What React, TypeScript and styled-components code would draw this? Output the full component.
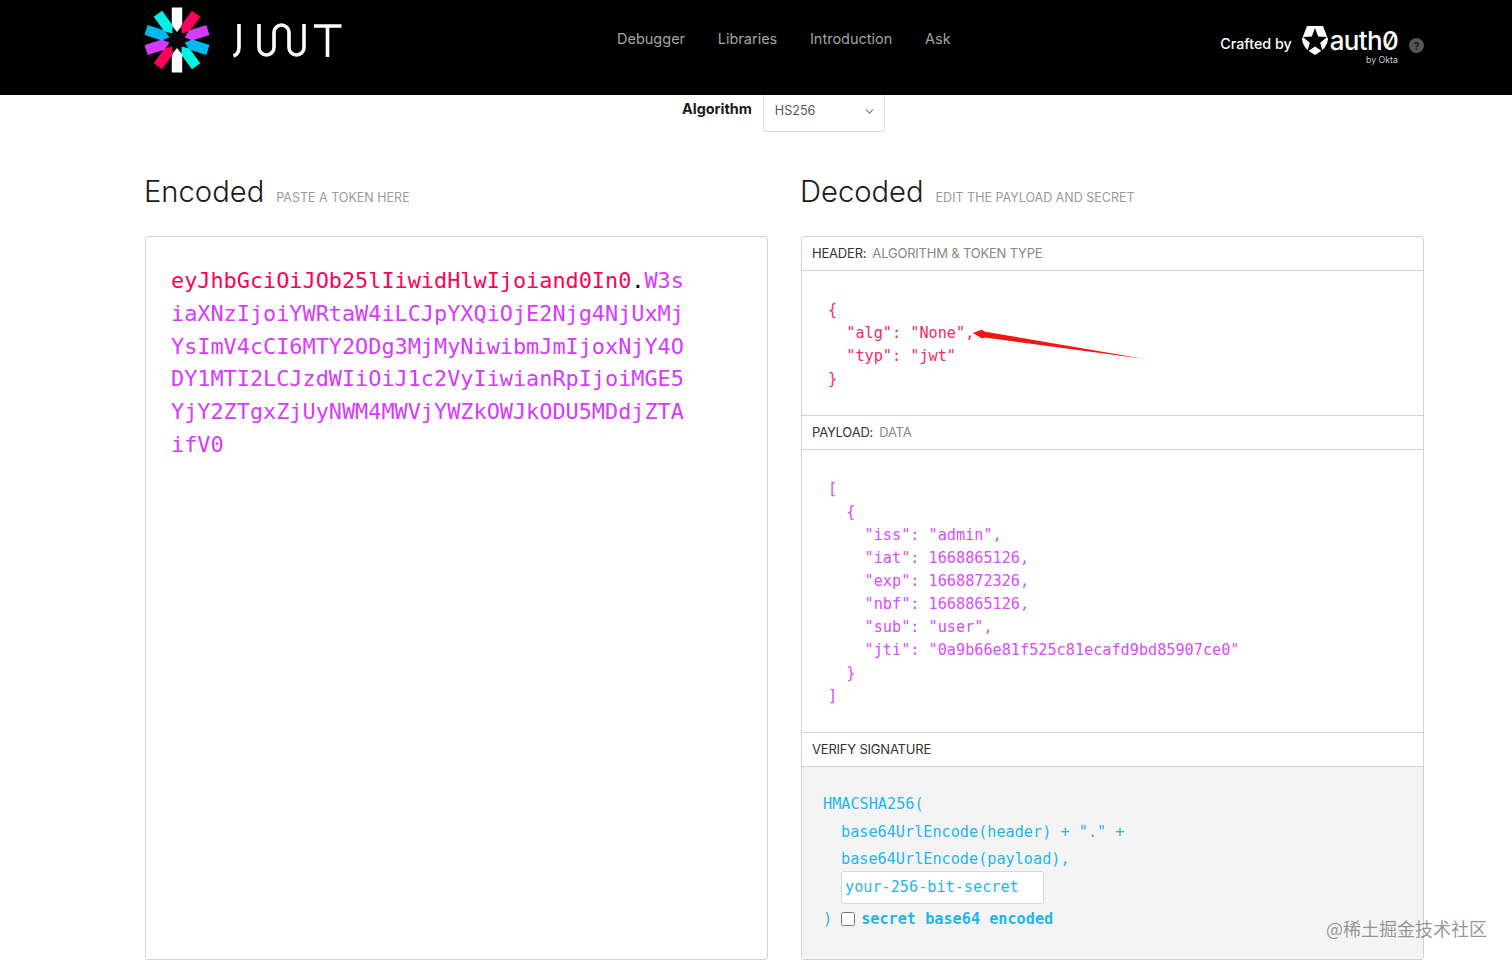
import styled, { createGlobalStyle } from 'styled-components';
import { ChevronDown } from 'lucide-react';

const GlobalStyle = createGlobalStyle`
  html, body {
    margin: 0;
    height: 965px;
    overflow: hidden;
    background: #fff;
    font-family: Inter, 'Liberation Sans', sans-serif;
  }
  * {
    box-sizing: border-box;
  }
`;

const mono = `'DejaVu Sans Mono', 'Liberation Mono', monospace`;

const Page = styled.div`
  position: relative;
  height: 965px;
  overflow: hidden;
`;

const TopBar = styled.header`
  height: 95px;
  background: #000;
  display: flex;
  align-items: flex-start;
  padding: 0 88px 0 145px;
`;

const Logo = styled.svg`
  width: 197px;
  height: 66px;
  flex: none;
  margin-top: 7px;
`;

const Nav = styled.nav`
  display: flex;
  gap: 32.7px;
  margin: 29px 0 0 275px;
`;

const NavLink = styled.a`
  color: #a3a3a3;
  font-size: 14.5px;
  line-height: 20px;
`;

const Crafted = styled.div`
  margin-left: auto;
  padding-top: 25px;
  display: flex;
  align-items: flex-start;
  color: #fff;
`;

const CraftedText = styled.span`
  font-size: 14.3px;
  line-height: 18px;
  font-weight: 500;
  margin: 10px 10px 0 0;
`;

const BrandBlock = styled.div`
  display: flex;
  flex-direction: column;
  align-items: flex-end;
`;

const BrandRow = styled.div`
  display: flex;
  align-items: center;
  gap: 2px;
  height: 30px;
`;

const BrandName = styled.span`
  font-size: 26px;
  font-weight: 500;
  letter-spacing: -0.7px;
  font-feature-settings: 'zero';
`;

const ByOkta = styled.span`
  font-size: 8.8px;
  line-height: 9px;
  color: #ccc;
`;

const HelpDot = styled.span`
  width: 15px;
  height: 15px;
  border-radius: 50%;
  background: #555;
  color: #1c1c1c;
  font-size: 10px;
  font-weight: 700;
  display: flex;
  align-items: center;
  justify-content: center;
  margin: 13px 0 0 11px;
`;

const Content = styled.main`
  padding: 0 88px 0 145px;
`;

const AlgorithmRow = styled.div`
  display: flex;
  align-items: flex-start;
  gap: 11px;
  margin-left: 537px;
`;

const AlgorithmLabel = styled.span`
  font-size: 14.4px;
  font-weight: 700;
  color: #1a1a1a;
  line-height: 28px;
`;

const AlgorithmSelect = styled.div`
  width: 122px;
  height: 37px;
  border: 1px solid #dcdcdc;
  border-top: none;
  border-radius: 0 0 4px 4px;
  padding: 0 8px 6px 11px;
  display: flex;
  align-items: center;
  justify-content: space-between;
  font-size: 12.6px;
  color: #555;
  svg {
    color: #777;
    margin-top: 2px;
  }
`;

const Columns = styled.div`
  display: grid;
  grid-template-columns: 623px 623px;
  gap: 33px;
  margin-top: 39px;
`;

const Column = styled.section`
  display: flex;
  flex-direction: column;
`;

const HeadingRow = styled.div`
  display: flex;
  align-items: baseline;
  gap: 12px;
  height: 65px;
`;

const Heading = styled.h2`
  margin: 0 0 0 -1px;
  font-size: 29.2px;
  font-weight: 300;
  line-height: 42px;
  color: #1a1a1a;
`;

const HeadingHint = styled.span`
  font-size: 12.5px;
  color: #9a9a9a;
`;

const Panel = styled.div`
  height: 724px;
  border: 1px solid #d2d2d2;
  border-radius: 3px;
  display: flex;
  flex-direction: column;
  overflow: hidden;
`;

const TokenText = styled.div`
  padding: 28px 25px;
  font-family: ${mono};
  font-size: 21.85px;
  line-height: 32.8px;
  color: #d63aff;
`;

const TokenLine = styled.div`
  white-space: pre;
`;

const TokenHead = styled.span`
  color: #fb015b;
`;

const TokenDot = styled.span`
  color: #000;
`;

const SectionTitle = styled.div`
  height: 34px;
  flex: none;
  display: flex;
  align-items: center;
  gap: 6px;
  padding: 0 10px 2px;
  font-size: 13px;
  letter-spacing: -0.2px;
  color: #333;
  border-bottom: 1px solid #d2d2d2;
`;

const SectionHint = styled.span`
  color: #888;
`;

const JsonBody = styled.pre<{ $color: string; $height: number; $top: number }>`
  position: relative;
  margin: 0;
  flex: none;
  height: ${(p) => p.$height}px;
  padding: ${(p) => p.$top}px 0 0 26px;
  font-family: ${mono};
  font-size: 15.2px;
  line-height: 23px;
  color: ${(p) => p.$color};
  border-bottom: 1px solid #d2d2d2;
`;

const Arrow = styled.svg`
  position: absolute;
  left: 170px;
  top: 55px;
  width: 180px;
  height: 40px;
`;

const SignatureBody = styled.div`
  flex: 1;
  background: #f4f4f5;
  padding: 24px 21px 0;
  font-family: ${mono};
  font-size: 15.2px;
  line-height: 27.5px;
  color: #1fb6ee;
`;

const SigLine = styled.div<{ $indent?: boolean }>`
  white-space: pre;
  padding-left: ${(p) => (p.$indent ? 18 : 0)}px;
`;

const SecretInput = styled.input`
  display: block;
  width: 203px;
  height: 33px;
  margin: -3px 0 0 18px;
  padding: 0 3px;
  border: 1px solid #d8d8d8;
  border-radius: 3px;
  background: #fff;
  font-family: ${mono};
  font-size: 15.2px;
  color: #1fb6ee;
  &::placeholder {
    color: #1fb6ee;
    opacity: 1;
  }
`;

const CheckRow = styled.label`
  display: flex;
  align-items: center;
  margin-top: 2px;
  white-space: pre;
`;

const Check = styled.input`
  width: 14px;
  height: 14px;
  margin: 0 6px 0 9px;
`;

const Bold = styled.span`
  font-weight: 700;
`;

const Watermark = styled.div`
  position: absolute;
  left: 1326px;
  top: 916px;
  font-family: 'Noto Sans CJK SC', sans-serif;
  font-size: 18px;
  line-height: 24px;
  color: rgba(110, 110, 110, 0.72);
  white-space: nowrap;
`;

const rayColors = ['#fff', '#fb015b', '#d63aff', '#00b9f1', '#00f2e6', '#fff', '#fb015b', '#d63aff', '#00b9f1', '#00f2e6'];

const JwtLogo = () => (
  <Logo viewBox="0 0 197 66" role="img" aria-label="JWT">
    <g transform="translate(32 33)">
      {rayColors.map((c, i) => (
        <polygon key={i} points="-5.2,-32.5 5.2,-32.5 5.2,-14.5 0,-8 -5.2,-14.5" fill={c} transform={`rotate(${i * 36})`} />
      ))}
    </g>
    <g fill="none" stroke="#fff" strokeWidth="3.6" transform="translate(-145 -7)">
      <path d="M239 24 V47 Q239 54 233.5 56" />
      <path d="M259 24 V47.5 A7.5 7.5 0 0 0 274 47.5 V32.5 A7.5 7.5 0 0 1 289 32.5 V47.5 A7.5 7.5 0 0 0 304 47.5 V24" />
      <path d="M314 26 H341.5 M327.5 26 V57" />
    </g>
  </Logo>
);

const Shield = () => (
  <svg width="26" height="29" viewBox="0 0 26 29">
    <path d="M5 0 H21 L26 13 Q26 22 13 29 Q0 22 0 13 Z" fill="#fff" />
    <polygon points="13,2 16.2,10.5 25,11 18.2,16.7 20.6,25.5 13,20.5 5.4,25.5 7.8,16.7 1,11 9.8,10.5" fill="#000" />
  </svg>
);

const tokenRest = [
  'iaXNzIjoiYWRtaW4iLCJpYXQiOjE2Njg4NjUxMj',
  'YsImV4cCI6MTY2ODg3MjMyNiwibmJmIjoxNjY4O',
  'DY1MTI2LCJzdWIiOiJ1c2VyIiwianRpIjoiMGE5',
  'YjY2ZTgxZjUyNWM4MWVjYWZkOWJkODU5MDdjZTA',
  'ifV0',
];

const headerJson = `{
  "alg": "None",
  "typ": "jwt"
}`;

const payloadJson = `[
  {
    "iss": "admin",
    "iat": 1668865126,
    "exp": 1668872326,
    "nbf": 1668865126,
    "sub": "user",
    "jti": "0a9b66e81f525c81ecafd9bd85907ce0"
  }
]`;

export default function App() {
  return (
    <Page>
      <GlobalStyle />
      <TopBar>
        <JwtLogo />
        <Nav>
          <NavLink>Debugger</NavLink>
          <NavLink>Libraries</NavLink>
          <NavLink>Introduction</NavLink>
          <NavLink>Ask</NavLink>
        </Nav>
        <Crafted>
          <CraftedText>Crafted by</CraftedText>
          <BrandBlock>
            <BrandRow>
              <Shield />
              <BrandName>auth0</BrandName>
            </BrandRow>
            <ByOkta>by Okta</ByOkta>
          </BrandBlock>
          <HelpDot>?</HelpDot>
        </Crafted>
      </TopBar>

      <Content>
        <AlgorithmRow>
          <AlgorithmLabel>Algorithm</AlgorithmLabel>
          <AlgorithmSelect>
            HS256
            <ChevronDown size={13} />
          </AlgorithmSelect>
        </AlgorithmRow>

        <Columns>
          <Column>
            <HeadingRow>
              <Heading>Encoded</Heading>
              <HeadingHint>PASTE A TOKEN HERE</HeadingHint>
            </HeadingRow>
            <Panel>
              <TokenText>
                <TokenLine>
                  <TokenHead>eyJhbGciOiJOb25lIiwidHlwIjoiand0In0</TokenHead>
                  <TokenDot>.</TokenDot>W3s
                </TokenLine>
                {tokenRest.map((line) => (
                  <TokenLine key={line}>{line}</TokenLine>
                ))}
              </TokenText>
            </Panel>
          </Column>

          <Column>
            <HeadingRow>
              <Heading>Decoded</Heading>
              <HeadingHint>EDIT THE PAYLOAD AND SECRET</HeadingHint>
            </HeadingRow>
            <Panel>
              <SectionTitle>
                HEADER: <SectionHint>ALGORITHM &amp; TOKEN TYPE</SectionHint>
              </SectionTitle>
              <JsonBody $color="#f5286c" $height={145} $top={28}>
                {headerJson}
                <Arrow viewBox="0 0 180 40">
                  <polygon points="1,7 10,3.5 12,5.5 173,33 13,11.5 10,12.5" fill="#f5140f" />
                </Arrow>
              </JsonBody>
              <SectionTitle>
                PAYLOAD: <SectionHint>DATA</SectionHint>
              </SectionTitle>
              <JsonBody $color="#d84dfb" $height={283} $top={28}>
                {payloadJson}
              </JsonBody>
              <SectionTitle>VERIFY SIGNATURE</SectionTitle>
              <SignatureBody>
                <SigLine>HMACSHA256(</SigLine>
                <SigLine $indent>base64UrlEncode(header) + "." +</SigLine>
                <SigLine $indent>base64UrlEncode(payload),</SigLine>
                <SecretInput placeholder="your-256-bit-secret" />
                <CheckRow>
                  )<Check type="checkbox" />
                  <Bold>secret base64 encoded</Bold>
                </CheckRow>
              </SignatureBody>
            </Panel>
          </Column>
        </Columns>
      </Content>

      <Watermark>@稀土掘金技术社区</Watermark>
    </Page>
  );
}
